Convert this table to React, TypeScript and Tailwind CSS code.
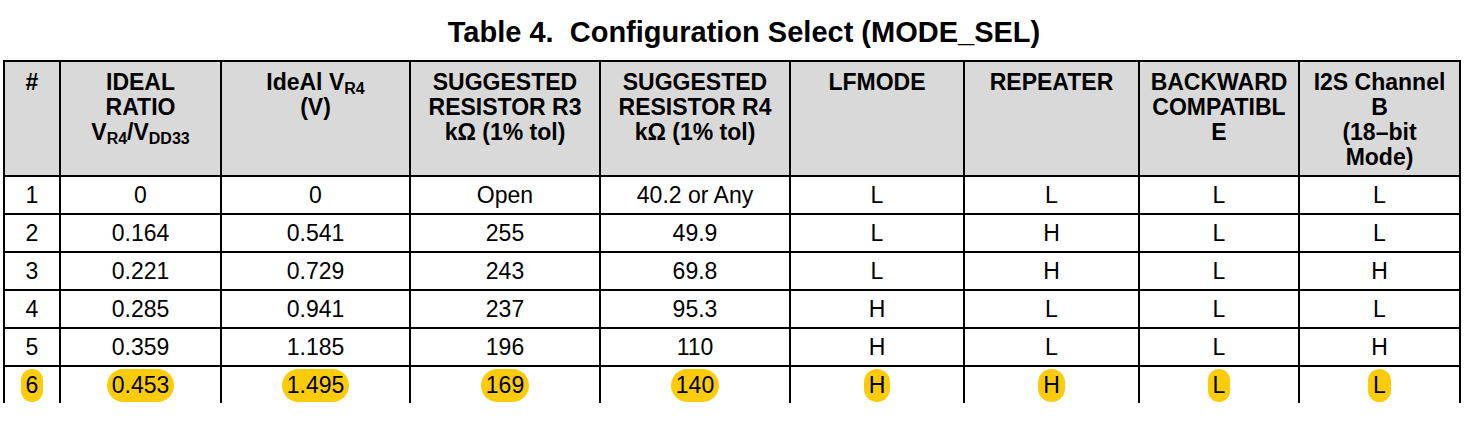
const widths = [56, 161, 189, 190, 190, 174, 175, 160, 161];

const rows = [
  ["1", "0", "0", "Open", "40.2 or Any", "L", "L", "L", "L"],
  ["2", "0.164", "0.541", "255", "49.9", "L", "H", "L", "L"],
  ["3", "0.221", "0.729", "243", "69.8", "L", "H", "L", "H"],
  ["4", "0.285", "0.941", "237", "95.3", "H", "L", "L", "L"],
  ["5", "0.359", "1.185", "196", "110", "H", "L", "L", "H"],
  ["6", "0.453", "1.495", "169", "140", "H", "H", "L", "L"],
];

function Sub({ children }: { children: React.ReactNode }) {
  return <sub className="text-[16px] relative top-[4px] align-baseline">{children}</sub>;
}

const headers: React.ReactNode[] = [
  <>#</>,
  <>
    IDEAL
    <br />
    RATIO
    <br />V<Sub>R4</Sub>/V<Sub>DD33</Sub>
  </>,
  <>
    IdeAl V<Sub>R4</Sub>
    <br />
    (V)
  </>,
  <>
    SUGGESTED
    <br />
    RESISTOR R3
    <br />
    kΩ (1% tol)
  </>,
  <>
    SUGGESTED
    <br />
    RESISTOR R4
    <br />
    kΩ (1% tol)
  </>,
  <>LFMODE</>,
  <>REPEATER</>,
  <>
    BACKWARD
    <br />
    COMPATIBL
    <br />E
  </>,
  <>
    I2S Channel
    <br />B
    <br />
    (18–bit
    <br />
    Mode)
  </>,
];

export default function App() {
  return (
    <div className="w-[1470px] h-[432px] bg-white text-black font-['Liberation_Sans',Arial,sans-serif] overflow-hidden">
      {/* Caption */}
      <div className="pt-[16px] pl-[18px] text-center text-[29px] leading-[32px] font-bold whitespace-pre">
        Table 4.  Configuration Select (MODE_SEL)
      </div>

      {/* Table, cut off at the bottom like the source page */}
      <div className="mt-[12px] ml-[3px] h-[343px] overflow-hidden">
        <table className="table-fixed border-collapse w-[1458px]">
          <colgroup>
            {widths.map((w, i) => (
              <col key={i} style={{ width: w }} />
            ))}
          </colgroup>
          <thead>
            <tr className="h-[115px] bg-[#d9d9d9]">
              {headers.map((h, i) => (
                <th
                  key={i}
                  className="border-2 border-black align-top pt-[8px] px-1 text-[23px] leading-[25px] font-bold text-center"
                >
                  {h}
                </th>
              ))}
            </tr>
          </thead>
          <tbody>
            {rows.map((r, ri) => {
              const hl = ri === rows.length - 1;
              return (
                <tr key={ri} className="h-[38px]">
                  {r.map((c, ci) => (
                    <td
                      key={ci}
                      className="border-2 border-black text-center align-middle p-0 text-[23px] leading-[25px]"
                    >
                      {hl ? (
                        <span className="inline-block rounded-full bg-[#fccb0a] px-[5px] py-[4px]">{c}</span>
                      ) : (
                        c
                      )}
                    </td>
                  ))}
                </tr>
              );
            })}
          </tbody>
        </table>
      </div>
    </div>
  );
}
